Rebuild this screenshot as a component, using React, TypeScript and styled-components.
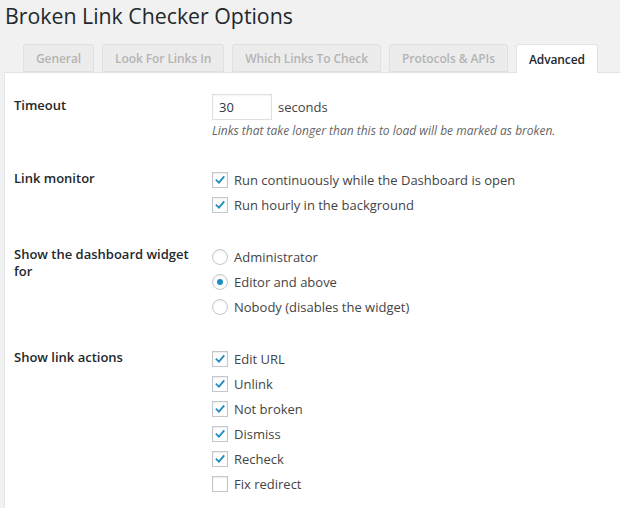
import React from "react";
import styled, { createGlobalStyle } from "styled-components";

const Global = createGlobalStyle`
  html, body { margin: 0; padding: 0; background: #f1f1f1; }
  body { font-family: "Open Sans", "Liberation Sans", sans-serif; color: #444; width: 620px; height: 508px; overflow: hidden; }
`;

const Page = styled.div`
  display: flex;
  flex-direction: column;
`;

const Title = styled.h1`
  margin: 0;
  padding: 1px 0 0 5px;
  font-size: 21.3px;
  font-weight: 400;
  line-height: 30px;
  color: #23282d;
  height: 44px;
  box-sizing: border-box;
`;

const Tabs = styled.div`
  display: flex;
  gap: 8px;
  padding-left: 23px;
  height: 28px;
  align-items: flex-end;
  position: relative;
  z-index: 1;
`;

const Tab = styled.div<{ $active?: boolean }>`
  height: ${(p) => (p.$active ? 29 : 28)}px;
  box-sizing: border-box;
  padding: 0 12px;
  display: flex;
  align-items: center;
  border: 1px solid ${(p) => (p.$active ? "#e2e2e2" : "#e0e0e0")};
  border-bottom: ${(p) => (p.$active ? "none" : "1px solid #e0e0e0")};
  border-radius: 3px 3px 0 0;
  background: ${(p) => (p.$active ? "#fff" : "#ececec")};
  color: ${(p) => (p.$active ? "#23282d" : "#b4b4b4")};
  font-size: 12px;
  letter-spacing: -0.09px;
  font-weight: 600;
  margin-bottom: ${(p) => (p.$active ? -1 : 0)}px;
`;

const Panel = styled.div`
  margin-left: 4px;
  background: #fff;
  border-top: 1px solid #e2e2e2;
  border-left: 1px solid #e6e6e6;
  padding: 21px 0 0 9px;
  display: flex;
  flex-direction: column;
  gap: 27px;
  min-height: 420px;
`;

const Row = styled.div`
  display: flex;
`;

const Label = styled.div<{ $pt?: number }>`
  width: 198px;
  flex: none;
  font-size: 13px;
  font-weight: 600;
  line-height: 17px;
  color: #23282d;
  padding-top: ${(p) => p.$pt ?? 3}px;
  padding-right: 14px;
  box-sizing: border-box;
`;

const Control = styled.div`
  display: flex;
  flex-direction: column;
`;

const InputLine = styled.div`
  display: flex;
  align-items: center;
  gap: 6px;
  font-size: 13px;
  color: #444;
`;

const NumInput = styled.div`
  width: 60px;
  height: 26px;
  box-sizing: border-box;
  border: 1px solid #e0e0e0;
  box-shadow: inset 0 1px 2px rgba(0, 0, 0, 0.05);
  background: #fff;
  padding-left: 6px;
  font-size: 13px;
  line-height: 24px;
  color: #32373c;
`;

const Desc = styled.div`
  margin-top: 2px;
  font-size: 12px;
  font-style: italic;
  line-height: 18px;
  color: #666;
`;

const Option = styled.div`
  height: 25px;
  display: flex;
  align-items: center;
  gap: 6px;
  font-size: 13px;
  color: #444;
`;

const Box = styled.span`
  width: 16px;
  height: 16px;
  box-sizing: border-box;
  border: 1px solid #c4c8cc;
  background: #fff;
  box-shadow: inset 0 1px 2px rgba(0, 0, 0, 0.08);
  display: flex;
  align-items: center;
  justify-content: center;
  flex: none;
`;

const Radio = styled(Box)`
  border-radius: 50%;
`;

const Dot = styled.span`
  width: 6px;
  height: 6px;
  border-radius: 50%;
  background: #1e8cbe;
`;

const Check = () => (
  <svg width="12" height="12" viewBox="0 0 12 12">
    <path d="M2.5 6.3 L4.9 8.6 L9.7 3" fill="none" stroke="#1e8cbe" strokeWidth="1.8" strokeLinecap="square" />
  </svg>
);

const CheckOpt = ({ checked, children }: { checked?: boolean; children: React.ReactNode }) => (
  <Option>
    <Box>{checked && <Check />}</Box>
    <span>{children}</span>
  </Option>
);

const RadioOpt = ({ checked, children }: { checked?: boolean; children: React.ReactNode }) => (
  <Option>
    <Radio>{checked && <Dot />}</Radio>
    <span>{children}</span>
  </Option>
);

export default function App() {
  return (
    <Page>
      <Global />
      <Title>Broken Link Checker Options</Title>
      <Tabs>
        <Tab>General</Tab>
        <Tab>Look For Links In</Tab>
        <Tab>Which Links To Check</Tab>
        <Tab>Protocols &amp; APIs</Tab>
        <Tab $active>Advanced</Tab>
      </Tabs>
      <Panel>
        <Row>
          <Label>Timeout</Label>
          <Control>
            <InputLine>
              <NumInput>30</NumInput>
              <span>seconds</span>
            </InputLine>
            <Desc>Links that take longer than this to load will be marked as broken.</Desc>
          </Control>
        </Row>
        <Row>
          <Label>Link monitor</Label>
          <Control>
            <CheckOpt checked>Run continuously while the Dashboard is open</CheckOpt>
            <CheckOpt checked>Run hourly in the background</CheckOpt>
          </Control>
        </Row>
        <Row>
          <Label $pt={2}>Show the dashboard widget for</Label>
          <Control>
            <RadioOpt>Administrator</RadioOpt>
            <RadioOpt checked>Editor and above</RadioOpt>
            <RadioOpt>Nobody (disables the widget)</RadioOpt>
          </Control>
        </Row>
        <Row>
          <Label>Show link actions</Label>
          <Control>
            <CheckOpt checked>Edit URL</CheckOpt>
            <CheckOpt checked>Unlink</CheckOpt>
            <CheckOpt checked>Not broken</CheckOpt>
            <CheckOpt checked>Dismiss</CheckOpt>
            <CheckOpt checked>Recheck</CheckOpt>
            <CheckOpt>Fix redirect</CheckOpt>
          </Control>
        </Row>
      </Panel>
    </Page>
  );
}
